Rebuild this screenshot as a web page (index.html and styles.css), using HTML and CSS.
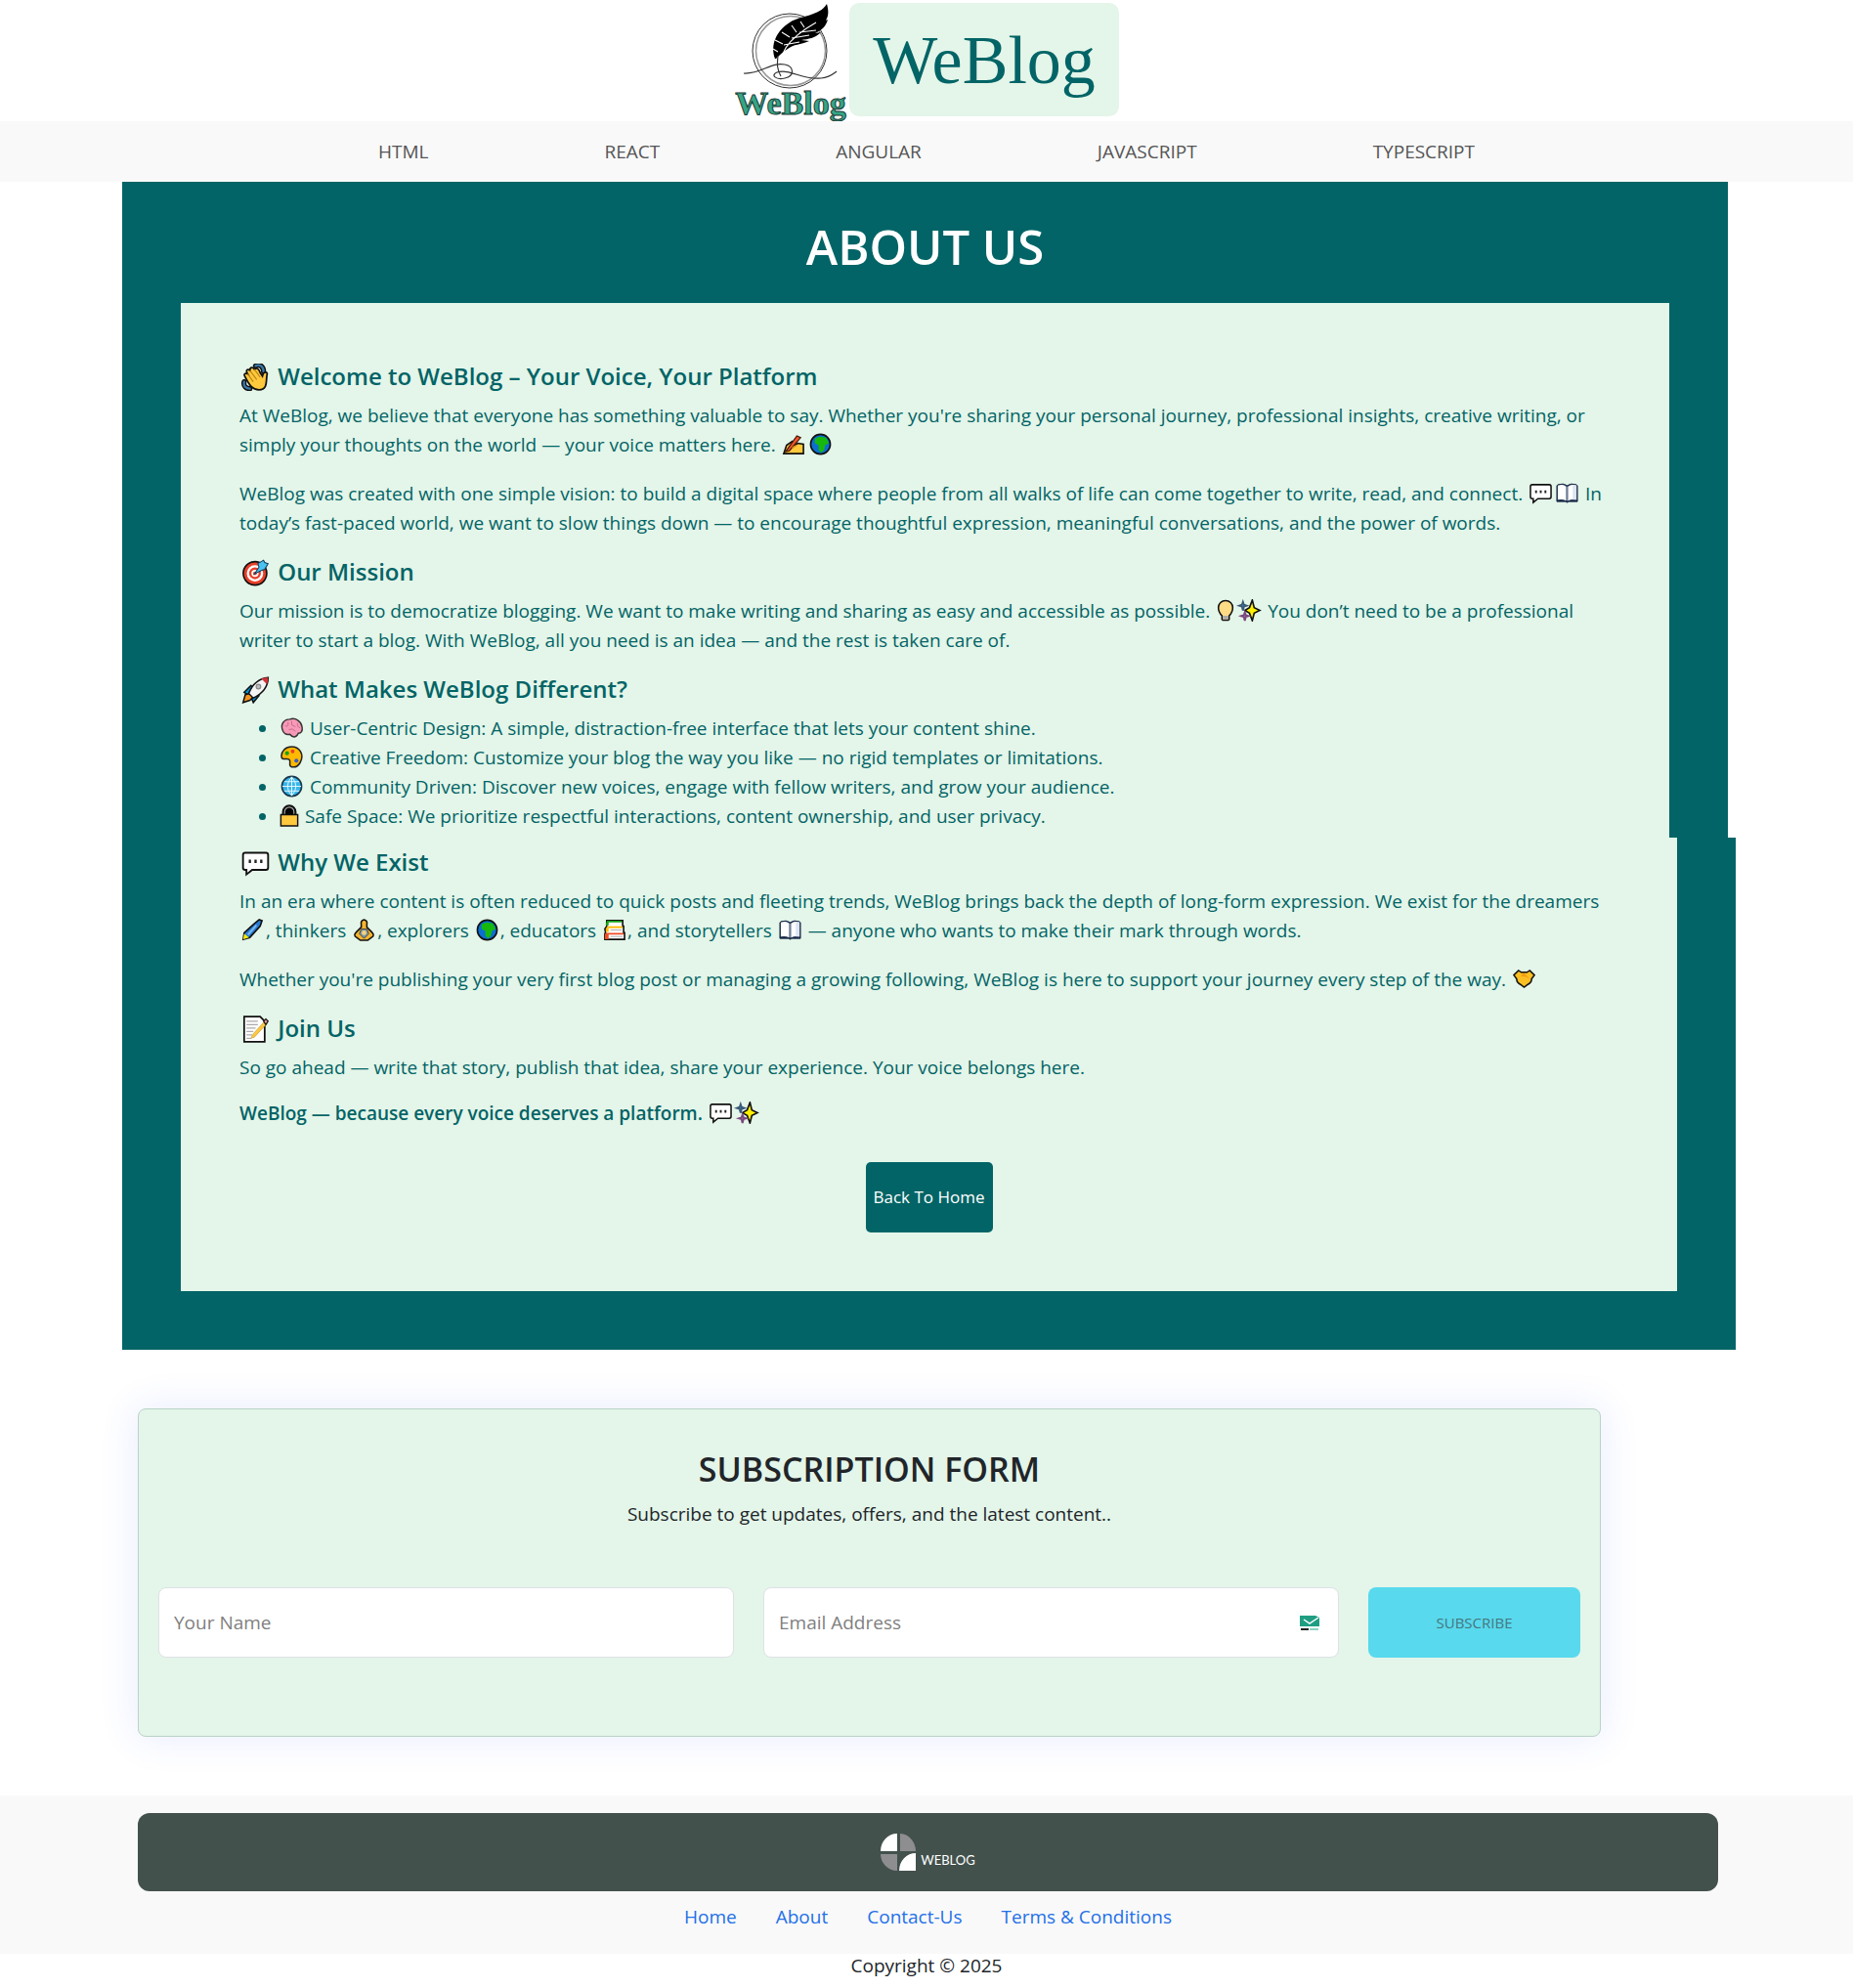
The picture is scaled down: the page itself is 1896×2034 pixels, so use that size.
FILE: index.html
```html
<!DOCTYPE html>
<html lang="en">
<head>
<meta charset="utf-8">
<title>WeBlog - About Us</title>
<link rel="stylesheet" href="styles.css">
</head>
<body>
<svg class="sprite" aria-hidden="true">
  <symbol id="wave" viewBox="0 0 24 24"><path d="M12 2c4-2 7 1 7 5M2 16c-1 4 2 6 5 6" fill="none" stroke="#111" stroke-width="4.500" stroke-linecap="round"/><path d="M12 2c4-2 7 1 7 5M2 16c-1 4 2 6 5 6" fill="none" stroke="#3b78a8" stroke-width="2" stroke-linecap="round"/><path d="M3 12c-2-3 0-4 2-3C3 6 5 4 7 6c0-3 3-3 4-1 2-2 4 0 5 3l2 3c1-5 5-4 4-1-1 5 1 13-7 13C8 23 6 17 3 12z" fill="#ffc83d" stroke="#111" stroke-width="1.500"/><path d="M5 9l5 7M7 6l6 8M11 5l5 7" stroke="#b98412" fill="none"/></symbol>
  <symbol id="write" viewBox="0 0 24 24"><path d="M1 22l3-9 6-4 3 4 3-2 6 1v10z" fill="#ffc83d" stroke="#111" stroke-width="1.700"/><path d="M3 20L15 3l4 2L7 19z" fill="#f0562b" stroke="#3a1405" stroke-width="1.200"/><path d="M10 16l5-3" stroke="#d9941a" stroke-width="1.500"/></symbol>
  <symbol id="earth" viewBox="0 0 24 24"><circle cx="12" cy="12" r="10.500" fill="#0c6fd0" stroke="#111" stroke-width="1.700"/><path d="M6 6l5-2 7 1 3 6-4 2-1 5-3 3-3-3v-5l-4-2z" fill="#16b80e"/></symbol>
  <symbol id="speech" viewBox="0 0 24 24"><path d="M3 3h18q2 0 2 2v11q0 2-2 2H9l-5 4v-4H3q-2 0-2-2V5q0-2 2-2z" fill="#fff" stroke="#111" stroke-width="1.600"/><path d="M6 9h2v3H6zM11 9h2v3h-2zM16 9h2v3h-2z" fill="#222"/></symbol>
  <symbol id="book" viewBox="0 0 24 24"><path d="M1 4h1V3q6-2 10 1 4-3 10-1v1h1v17h-9l-2 1-2-1H1z" fill="#1b2c4a" stroke="#1b2c4a"/><path d="M2 4q6-2 9 1v15q-4-2-9-1zM22 4q-6-2-9 1v15q4-2 9-1z" fill="#fff"/><path d="M12 5h1v15h-1z" fill="#c8d2e6"/><path d="M18 4q2-1 4 0v15h-4z" fill="#dde4f2"/></symbol>
  <symbol id="target" viewBox="0 0 24 24"><circle cx="11.500" cy="12.500" r="10.300" fill="#e8402a" stroke="#111" stroke-width="1.400"/><circle cx="11.500" cy="12.500" r="6.200" fill="none" stroke="#fff" stroke-width="2"/><circle cx="11.500" cy="12.500" r="2.400" fill="none" stroke="#fff" stroke-width="1.500"/><path d="M11 13l4-6-1-3 5-3 1 2 3 1-3 5-3 1z" fill="#4cc2f1" stroke="#0b3f5e" stroke-width=".9"/></symbol>
  <symbol id="bulb" viewBox="0 0 24 24"><path d="M8 22v-4q-4-4-4-9a8 8 0 0 1 16 0q0 5-4 9v4l-1 1H9z" fill="#ffdb85" stroke="#111" stroke-width="1.700"/><path d="M9 18h6v4H9z" fill="#aaa"/></symbol>
  <symbol id="sparkles" viewBox="0 0 24 24"><path d="M15 1l2 8 6 3-6 3-2 8-3-8-5-3 5-3z" fill="#fff100" stroke="#111" stroke-width="1.700"/><path d="M5 3l1 3 3 1-3 1-1 4-1-4-3-1 3-1z" fill="#3ba7e0" stroke="#3b5a78" stroke-width="2"/><path d="M7 14l1 3 3 1-3 1-1 4-1-4-3-1 3-1z" fill="#c77fc9" stroke="#7b4a7d" stroke-width="2"/></symbol>
  <symbol id="rocket" viewBox="0 0 24 24"><path d="M2 14l6-6 7 9-5 6-2-5z" fill="#0095d9" stroke="#111" stroke-width="1.300"/><path d="M1 23l2-7 4-1 3 3-3 3z" fill="#f7931e" stroke="#111" stroke-width="1.300"/><path d="M6 15C9 7 14 2 23 1c0 8-5 14-13 18z" fill="#f4f4f4" stroke="#111" stroke-width="1.300"/><path d="M17 2q3-1 6-1 0 3-1 6z" fill="#d13438"/><circle cx="14.500" cy="9" r="2" fill="#bbb" stroke="#888"/></symbol>
  <symbol id="brain" viewBox="0 0 24 24"><path d="M2 14C0 8 4 3 10 3c6-2 12 2 13 8 1 5-1 7-4 7-2 5-6 5-9 1-4 1-7-1-8-5z" fill="#f79ab8" stroke="#333" stroke-width="1.500"/><path d="M5 10q4 2 3-4M12 5v4l4 2M9 14q4-2 7 2M18 7q0 5 3 5" fill="none" stroke="#c9688a"/></symbol>
  <symbol id="palette" viewBox="0 0 24 24"><path d="M12 1C5 1 1 6 1 11c0 4 3 3 6 3 4 0 3 3 3 6s7 5 11-2C26 9 20 1 12 1z" fill="#ffb900" stroke="#222" stroke-width="1.600"/><circle cx="7" cy="8" r="2.200" fill="#16a316"/><circle cx="13" cy="6" r="2" fill="#e8402a"/><circle cx="17" cy="16" r="2.200" fill="#3b5fc0"/></symbol>
  <symbol id="globe" viewBox="0 0 24 24"><circle cx="12" cy="12" r="10.500" fill="#38b6ea" stroke="#15384c" stroke-width="1.700"/><path d="M12 2v20M2 12h20M4 7h16M4 17h16M12 2q-9 10 0 20M12 2q9 10 0 20" stroke="#e7f8ff" fill="none"/></symbol>
  <symbol id="lock" viewBox="0 0 20 24"><path d="M3 13V8a7 7 0 0 1 14 0v5" fill="#050505" stroke="#111" stroke-width="1.500"/><path d="M5 11V8a5 5 0 0 1 10 0v3" fill="none" stroke="#aaa" stroke-width="1.200"/><path d="M1 11h18v12H1z" fill="#ffc83d" stroke="#111" stroke-width="1.500"/></symbol>
  <symbol id="pen" viewBox="0 0 24 24"><path d="M2 22l1-7L14 5l5-4 3 1-2 6L9 20z" fill="#2b7cd3" stroke="#111" stroke-width="1.700"/><path d="M2 22l1-6 5 4z" fill="#fff100"/><path d="M7 17l9-10" stroke="#78b9f0" stroke-width="2"/></symbol>
  <symbol id="yoga" viewBox="0 0 24 24"><path d="M12 1q4 1 3 5v3l5 5q4 4 0 6l-4 3H8l-4-3q-4-2 0-6l5-5V6q-1-4 3-5z" fill="#f5b52e" stroke="#111" stroke-width="1.600"/><path d="M9 11h6l2 5-5 5-5-5z" fill="#7d97a8" stroke="#444"/><circle cx="12" cy="15" r="2.500" fill="#f5d27a"/></symbol>
  <symbol id="books" viewBox="0 0 24 24"><path d="M4 2h17v6h1v7h1v7H2v-6h1l-1-5 2-3z" fill="#fff" stroke="#111" stroke-width="1.700"/><path d="M4 2h16v2H4zM3 4h3v3H3z" fill="#16a316"/><path d="M4 8h17v2H4z" fill="#ffb900"/><path d="M3 15h19v2H3zM2 16h4v6H2z" fill="#f04b24"/><path d="M3 10h3v4H3z" fill="#ffb900"/><path d="M8 12h12M8 19h13" stroke="#aaa"/></symbol>
  <symbol id="shake" viewBox="0 0 24 24"><path d="M1 8l5-5 3 2h6l3-2 5 5-3 4q0 4-4 6l-4 3-4-3q-4-2-4-6z" fill="#fcbf23" stroke="#111" stroke-width="1.600"/><path d="M8 9l4-3 6 6-4-2" fill="#f49b13"/></symbol>
  <symbol id="memo" viewBox="0 0 24 24"><path d="M2 1h14l4 4v18H2z" fill="#fff" stroke="#111" stroke-width="1.500"/><path d="M4 5h10M4 8h10M4 11h8M4 14h6M4 17h5M4 20h4" stroke="#aaa"/><path d="M8 20l2-4L20 5l2 2-11 12z" fill="#ffc83d" stroke="#b8923a" stroke-width=".5"/><path d="M19 5l2-2 2 2-2 3z" fill="#e99a9a" stroke="#111"/></symbol>
</svg>

<header class="masthead">
  <svg class="crest" viewBox="0 0 118 124" role="img" aria-label="WeBlog">
    <circle cx="57" cy="52" r="38" fill="none" stroke="#333"/>
    <circle cx="58" cy="52" r="35.500" fill="none" stroke="#999" stroke-width="1.500"/>
    <path d="M42 60C37 46 43 32 57 23c12-8 30-6 38-19 2 7 2 12-1 17l2-1c-2 7-6 11-13 14l6-1c-6 6-13 7-20 8l8 1c-9 4-16 3-22 8-5 3-8 6-12 10z" fill="#000"/>
    <path d="M48 78C44 56 54 40 84 23M45 53l-5-3M50 45l-8-4M57 38l-8-5M64 33l-5-7M72 28l-4-6M51 46l16-3M59 39l18-3M67 33l17-2" fill="none" stroke="#fff" stroke-width="1.100"/>
    <path d="M10 75C28 76 38 63 52 66c10 2 10 12 0 14-9 2-15-3-8-6 14-4 25 8 45 6 9-1 12-4 16-7M45 57c-1 9-1 14 3 21" fill="none" stroke="#333" stroke-width="1.200"/>
    <text class="crest-text" x="58" y="117" text-anchor="middle">WeBlog</text>
  </svg>
  <div class="wordmark">WeBlog</div>
</header>

<nav class="topics" aria-label="Topics">
  <a href="#">HTML</a><a href="#">REACT</a><a href="#">ANGULAR</a><a href="#">JAVASCRIPT</a><a href="#">TYPESCRIPT</a>
</nav>

<main>
  <section class="frame frame-upper">
    <h1>ABOUT US</h1>
    <div class="sheet sheet-upper">
      <h2><svg class="emoji"><use href="#wave"/></svg> Welcome to WeBlog – Your Voice, Your Platform</h2>
      <p>At WeBlog, we believe that everyone has something valuable to say. Whether you're sharing your personal journey, professional insights, creative writing, or<br>simply your thoughts on the world — your voice matters here. <svg class="emoji"><use href="#write"/></svg><svg class="emoji"><use href="#earth"/></svg></p>
      <p>WeBlog was created with one simple vision: to build a digital space where people from all walks of life can come together to write, read, and connect. <svg class="emoji"><use href="#speech"/></svg><svg class="emoji"><use href="#book"/></svg> In<br>today’s fast-paced world, we want to slow things down — to encourage thoughtful expression, meaningful conversations, and the power of words.</p>
      <h2><svg class="emoji"><use href="#target"/></svg> Our Mission</h2>
      <p>Our mission is to democratize blogging. We want to make writing and sharing as easy and accessible as possible. <svg class="emoji emoji-slim"><use href="#bulb"/></svg><svg class="emoji"><use href="#sparkles"/></svg> You don’t need to be a professional<br>writer to start a blog. With WeBlog, all you need is an idea — and the rest is taken care of.</p>
      <h2><svg class="emoji"><use href="#rocket"/></svg> What Makes WeBlog Different?</h2>
      <ul>
        <li><svg class="emoji"><use href="#brain"/></svg> User-Centric Design: A simple, distraction-free interface that lets your content shine.</li>
        <li><svg class="emoji"><use href="#palette"/></svg> Creative Freedom: Customize your blog the way you like — no rigid templates or limitations.</li>
        <li><svg class="emoji"><use href="#globe"/></svg> Community Driven: Discover new voices, engage with fellow writers, and grow your audience.</li>
        <li><svg class="emoji emoji-slim"><use href="#lock"/></svg> Safe Space: We prioritize respectful interactions, content ownership, and user privacy.</li>
      </ul>
    </div>
  </section>
  <section class="frame frame-lower">
    <div class="sheet sheet-lower">
      <h2><svg class="emoji"><use href="#speech"/></svg> Why We Exist</h2>
      <p>In an era where content is often reduced to quick posts and fleeting trends, WeBlog brings back the depth of long-form expression. We exist for the dreamers<br><svg class="emoji"><use href="#pen"/></svg>, thinkers <svg class="emoji"><use href="#yoga"/></svg>, explorers <svg class="emoji"><use href="#earth"/></svg>, educators <svg class="emoji"><use href="#books"/></svg>, and storytellers <svg class="emoji"><use href="#book"/></svg> — anyone who wants to make their mark through words.</p>
      <p>Whether you're publishing your very first blog post or managing a growing following, WeBlog is here to support your journey every step of the way. <svg class="emoji"><use href="#shake"/></svg></p>
      <h2><svg class="emoji"><use href="#memo"/></svg> Join Us</h2>
      <p class="pledge">So go ahead — write that story, publish that idea, share your experience. Your voice belongs here.</p>
      <p class="motto">WeBlog — because every voice deserves a platform. <svg class="emoji"><use href="#speech"/></svg><svg class="emoji"><use href="#sparkles"/></svg></p>
      <button class="home" type="button">Back To Home</button>
    </div>
  </section>

  <form class="subscribe">
    <h2>SUBSCRIPTION FORM</h2>
    <p>Subscribe to get updates, offers, and the latest content..</p>
    <div class="fields">
      <input type="text" placeholder="Your Name" aria-label="Your Name">
      <div class="email">
        <input type="email" placeholder="Email Address" aria-label="Email Address">
        <svg class="mail" viewBox="0 0 20 16" aria-hidden="true"><path d="M0 0h16l4 2v9H0z" fill="#1f9e83"/><path d="M4 4l6 4 9-6" fill="none" stroke="#fff" stroke-width="1.500"/><path d="M1 13h8v2H1z" fill="#222"/><path d="M10 13h9v2h-9z" fill="#8fd3c4"/></svg>
      </div>
      <button type="submit">SUBSCRIBE</button>
    </div>
  </form>
</main>

<footer>
  <div class="links-area">
    <div class="bar">
      <svg class="mark" viewBox="0 0 37 38" aria-hidden="true"><path d="M17 0v18H0A17 18 0 0 1 17 0zM36 20v18H19A17 18 0 0 1 36 20z" fill="#fff"/><path d="M20 0a17 18 0 0 1 16 18H20zM0 21h17v17A17 17 0 0 1 0 21z" fill="#8e8e90"/></svg>
      <span>WEBLOG</span>
    </div>
    <nav class="links" aria-label="Footer"><a href="#">Home</a><a href="#">About</a><a href="#">Contact-Us</a><a href="#">Terms &amp; Conditions</a></nav>
  </div>
  <p class="copyright">Copyright © 2025</p>
</footer>
</body>
</html>
```

FILE: styles.css
```css
* { box-sizing: border-box; }
body { margin: 0; font: 19px/30px "Open Sans", "Noto Sans", sans-serif; color: #212529; background: #fff; }
h1, h2, p, ul { margin: 0; }
a { text-decoration: none; }
.sprite { display: none; }

.masthead { display: flex; justify-content: center; align-items: flex-start; height: 124px; }
.crest { width: 118px; height: 124px; }
.crest-text { font: bold 34px "Liberation Serif", serif; fill: #35a585; stroke: #1c3b35; stroke-width: 1px; }
.wordmark { width: 276px; margin-top: 3px; padding-top: 19px; height: 116px; border-radius: 10px; background: #e4f5e9; color: #026466; font: 70px/80px "Liberation Serif", serif; text-align: center; }

.topics { display: flex; justify-content: center; gap: 180px; padding: 16px 0; background: #f9f9f9; }
.topics a { color: #555; }

.frame { margin-left: 125px; padding: 0 60px; background: #026466; color: #026466; }
.frame-upper { margin-right: 128px; }
.frame-lower { margin-right: 120px; padding-bottom: 60px; }
.frame h1 { padding: 36px 0 28px; color: #fff; font-size: 49px; line-height: 60px; font-weight: 600; text-align: center; }
.sheet { padding: 0 60px; background: #e4f5e9; white-space: nowrap; }
.sheet-upper { padding-top: 60px; padding-bottom: 7px; }
.sheet-lower { padding-top: 10px; padding-bottom: 60px; }
.sheet h2 { margin-bottom: 10px; font-size: 24px; line-height: 30px; font-weight: 600; }
.sheet p { margin-bottom: 20px; }
.sheet ul { padding-left: 40px; }
.sheet .pledge { margin-bottom: 17px; }
.sheet .motto { margin-bottom: 35px; font-weight: 600; }
.emoji { width: 27px; height: 23px; vertical-align: -4px; }
.emoji-slim { width: 22px; }
h2 .emoji { width: 33px; height: 28px; vertical-align: -6px; }
.home { display: block; width: 130px; height: 72px; margin: 0 auto; padding: 0; border: 0; border-radius: 5px; background: #026466; color: #fff; font: 17px/24px "Open Sans", sans-serif; }

.subscribe { margin: 60px 258px 60px 141px; padding: 40px 20px 80px; border: 1px solid #b9d3c8; border-radius: 8px; background: #e4f5e9; box-shadow: 0 0 40px rgba(60, 90, 255, .12); text-align: center; }
.subscribe h2 { margin-bottom: 10px; font-size: 34px; line-height: 42px; font-weight: 600; }
.fields { display: grid; grid-template-columns: 589fr 589fr 217fr; gap: 30px; margin-top: 60px; }
.fields input { width: 100%; height: 72px; padding: 0 15px; border: 1px solid #dee2e6; border-radius: 8px; background: #fff; font: inherit; }
.fields input::placeholder { color: #808080; }
.email { position: relative; }
.mail { position: absolute; right: 20px; top: 29px; width: 20px; height: 16px; }
.fields button { border: 0; border-radius: 8px; background: #58d9ed; color: #46777e; font: 15px/24px "Open Sans", sans-serif; }

.links-area { padding: 18px 138px 23px 141px; background: #f9f9f9; }
.bar { display: flex; justify-content: center; align-items: center; gap: 4px; height: 80px; border-radius: 12px; background: #43514d; color: #fff; font: 13px/20px Lato, sans-serif; }
.mark { width: 37px; height: 38px; }
.bar span { padding-top: 15px; }
.links { display: flex; justify-content: center; gap: 40px; padding-top: 11px; }
.links a { color: #2470e8; }
.copyright { padding-bottom: 11px; line-height: 24px; text-align: center; }
```
